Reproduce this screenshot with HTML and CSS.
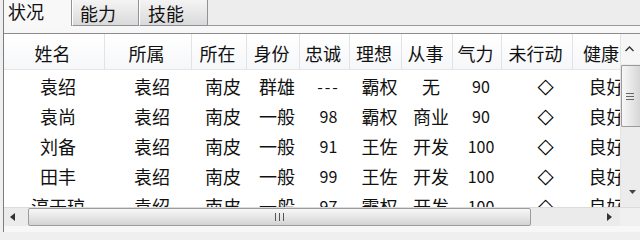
FILE: index.html
```html
<!DOCTYPE html>
<html lang="zh-CN">
<head>
<meta charset="utf-8">
<title>状况</title>
<link rel="stylesheet" href="styles.css">
</head>
<body>
<div class="win">
  <div class="tabs">
    <div class="tab active">状况</div>
    <div class="tab t2">能力</div>
    <div class="tab t3">技能</div>
    <div class="tabfill"></div>
  </div>
  <div class="panel">
    <div class="list">
      <div class="list-main">
        <div class="view">
          <div class="grid hdr">
            <div class="h">姓名</div><div class="h">所属</div><div class="h">所在</div><div class="h">身份</div><div class="h">忠诚</div><div class="h">理想</div><div class="h">从事</div><div class="h">气力</div><div class="h">未行动</div><div class="h">健康</div>
          </div>
          <div class="rows">
            <div class="grid row"><div>袁绍</div><div>袁绍</div><div>南皮</div><div>群雄</div><div class="num dash">---</div><div>霸权</div><div>无</div><div class="num">90</div><div class="dia">◇</div><div>良好</div></div>
            <div class="grid row"><div>袁尚</div><div>袁绍</div><div>南皮</div><div>一般</div><div class="num">98</div><div>霸权</div><div>商业</div><div class="num">90</div><div class="dia">◇</div><div>良好</div></div>
            <div class="grid row"><div>刘备</div><div>袁绍</div><div>南皮</div><div>一般</div><div class="num">91</div><div>王佐</div><div>开发</div><div class="num">100</div><div class="dia">◇</div><div>良好</div></div>
            <div class="grid row"><div>田丰</div><div>袁绍</div><div>南皮</div><div>一般</div><div class="num">99</div><div>王佐</div><div>开发</div><div class="num">100</div><div class="dia">◇</div><div>良好</div></div>
            <div class="grid row"><div>淳于琼</div><div>袁绍</div><div>南皮</div><div>一般</div><div class="num">97</div><div>霸权</div><div>开发</div><div class="num">100</div><div class="dia">◇</div><div>良好</div></div>
          </div>
        </div>
        <div class="vscroll">
          <div class="vbtn up"><svg width="9" height="6" viewBox="0 0 9 6"><path d="M0.5 5 L4.5 1 L8.5 5" fill="none" stroke="#333" stroke-width="1.4"/></svg></div>
          <div class="vthumb"><span></span><span></span><span></span></div>
          <div class="vtrack"></div>
          <div class="vbtn down"><svg width="7" height="4" viewBox="0 0 7 4"><path d="M0 0 H7 L3.5 4 Z" fill="#444"/></svg></div>
        </div>
      </div>
      <div class="hscroll">
        <div class="hbtn left"><svg width="5" height="8" viewBox="0 0 5 8"><path d="M5 0 V8 L0 4 Z" fill="#333"/></svg></div>
        <div class="hthumb"><span></span><span></span><span></span></div>
        <div class="htrack"></div>
        <div class="hbtn right"><svg width="5" height="8" viewBox="0 0 5 8"><path d="M0 0 V8 L5 4 Z" fill="#333"/></svg></div>
        <div class="corner"></div>
      </div>
    </div>
  </div>
</div>
</body>
</html>
```
FILE: styles.css
```css
html, body {
  margin: 0;
  padding: 0;
}
body {
  width: 640px;
  height: 232px;
  overflow: hidden;
  background: #efefef;
  font-family: "Noto Sans CJK SC", "Noto Sans", sans-serif;
  font-size: 18px;
  color: #111;
}
.win {
  margin-left: 3px;
  border-left: 1px solid #7d7d7d;
  height: 232px;
  display: flex;
  flex-direction: column;
}
.tabs {
  display: flex;
  height: 26px;
  flex: none;
}
.tab {
  box-sizing: border-box;
  height: 26px;
  line-height: 22px;
  white-space: nowrap;
}
.tab.active {
  width: 68px;
  padding-left: 4px;
  background: #f8f8f8;
  border-right: 1px solid #8f9298;
}
.tab.t2, .tab.t3 {
  height: 26px;
  padding-top: 2px;
  background: linear-gradient(#f4f4f4, #e6e6e6 55%, #d9d9d9);
  border-right: 1px solid #8f9298;
  border-bottom: 1px solid #8f9298;
  border-left: 1px solid #ffffff;
}
.tab.t2 {
  width: 67px;
  padding-left: 7px;
}
.tab.t3 {
  width: 69px;
  padding-left: 8px;
}
.tabfill {
  flex: 1;
  border-bottom: 1px solid #9a9a9a;
  background: #ededed;
  box-sizing: border-box;
  height: 26px;
}
.panel {
  flex: 1;
  background: #f7f7f7;
  padding-top: 7px;
  display: flex;
  flex-direction: column;
}
.list {
  border-top: 1px solid #8c8c8c;
  background: #fff;
  display: flex;
  flex-direction: column;
  height: 192px;
  flex: none;
}
.list-main {
  display: flex;
  height: 173px;
  flex: none;
}
.view {
  width: 616px;
  overflow: hidden;
  flex: none;
}
.grid {
  display: grid;
  grid-template-columns: 101px 87px 55px 53px 50px 52px 51px 49px 71px 60px;
  width: 629px;
}
.hdr {
  height: 35px;
  border-bottom: 1px solid #e6e6e6;
  background: linear-gradient(#ffffff, #f6f7f9);
}
.h {
  box-sizing: border-box;
  border-right: 1px solid #e2e3e5;
  line-height: 31px;
  padding-top: 4px;
  text-align: center;
  padding-right: 3px;
  white-space: nowrap;
}
.rows {
  padding-top: 1px;
}
.row {
  height: 30px;
}
.row > div {
  line-height: 30px;
  text-align: center;
  padding-left: 7px;
  white-space: nowrap;
}
.row > .num {
  font-size: 16px;
}
.row > .dash {
  letter-spacing: 2px;
}
.row > .dia {
  font-family: "DejaVu Sans", sans-serif;
  font-size: 21px;
  font-weight: bold;
  color: #000;
  padding-left: 16px;
}
.vscroll {
  width: 20px;
  flex: none;
  display: flex;
  flex-direction: column;
  background: #ececec;
  border-left: 1px solid #e4e4e4;
  box-sizing: border-box;
}
.vbtn {
  display: flex;
  align-items: center;
  justify-content: center;
  flex: none;
}
.vbtn.up {
  height: 30px;
  background: #f6f6f6;
  padding-right: 3px;
}
.vbtn.down {
  height: 30px;
  padding-left: 4px;
}
.vthumb {
  height: 62px;
  margin-top: 1px;
  border: 1px solid #9a9a9a;
  border-right: none;
  border-radius: 2px 0 0 2px;
  background: linear-gradient(90deg, #f7f7f7, #e4e4e4 60%, #d6d6d6);
  display: flex;
  flex-direction: column;
  justify-content: center;
  align-items: flex-start;
  padding-left: 4px;
  gap: 2px;
  flex: none;
  box-sizing: border-box;
}
.vthumb span {
  width: 8px;
  height: 1px;
  background: #666;
}
.vtrack {
  flex: 1;
}
.hscroll {
  height: 19px;
  flex: none;
  display: flex;
  background: #ebebeb;
  border-top: 1px solid #dcdcdc;
  box-sizing: border-box;
}
.hbtn {
  display: flex;
  align-items: center;
  justify-content: center;
  flex: none;
}
.hbtn.left {
  width: 23px;
  padding-right: 6px;
  box-sizing: border-box;
}
.hbtn.right {
  width: 30px;
  padding-left: 8px;
  box-sizing: border-box;
}
.hthumb {
  width: 503px;
  margin-left: 1px;
  border: 1px solid #9c9c9c;
  border-radius: 2px;
  background: linear-gradient(#f7f7f7, #e6e6e6 50%, #d3d3d3);
  display: flex;
  align-items: center;
  justify-content: center;
  gap: 3px;
  box-sizing: border-box;
  flex: none;
}
.hthumb span {
  width: 1px;
  height: 8px;
  background: #555;
}
.htrack {
  flex: 1;
}
.corner {
  width: 20px;
  background: #f0f0f0;
  flex: none;
}
```
